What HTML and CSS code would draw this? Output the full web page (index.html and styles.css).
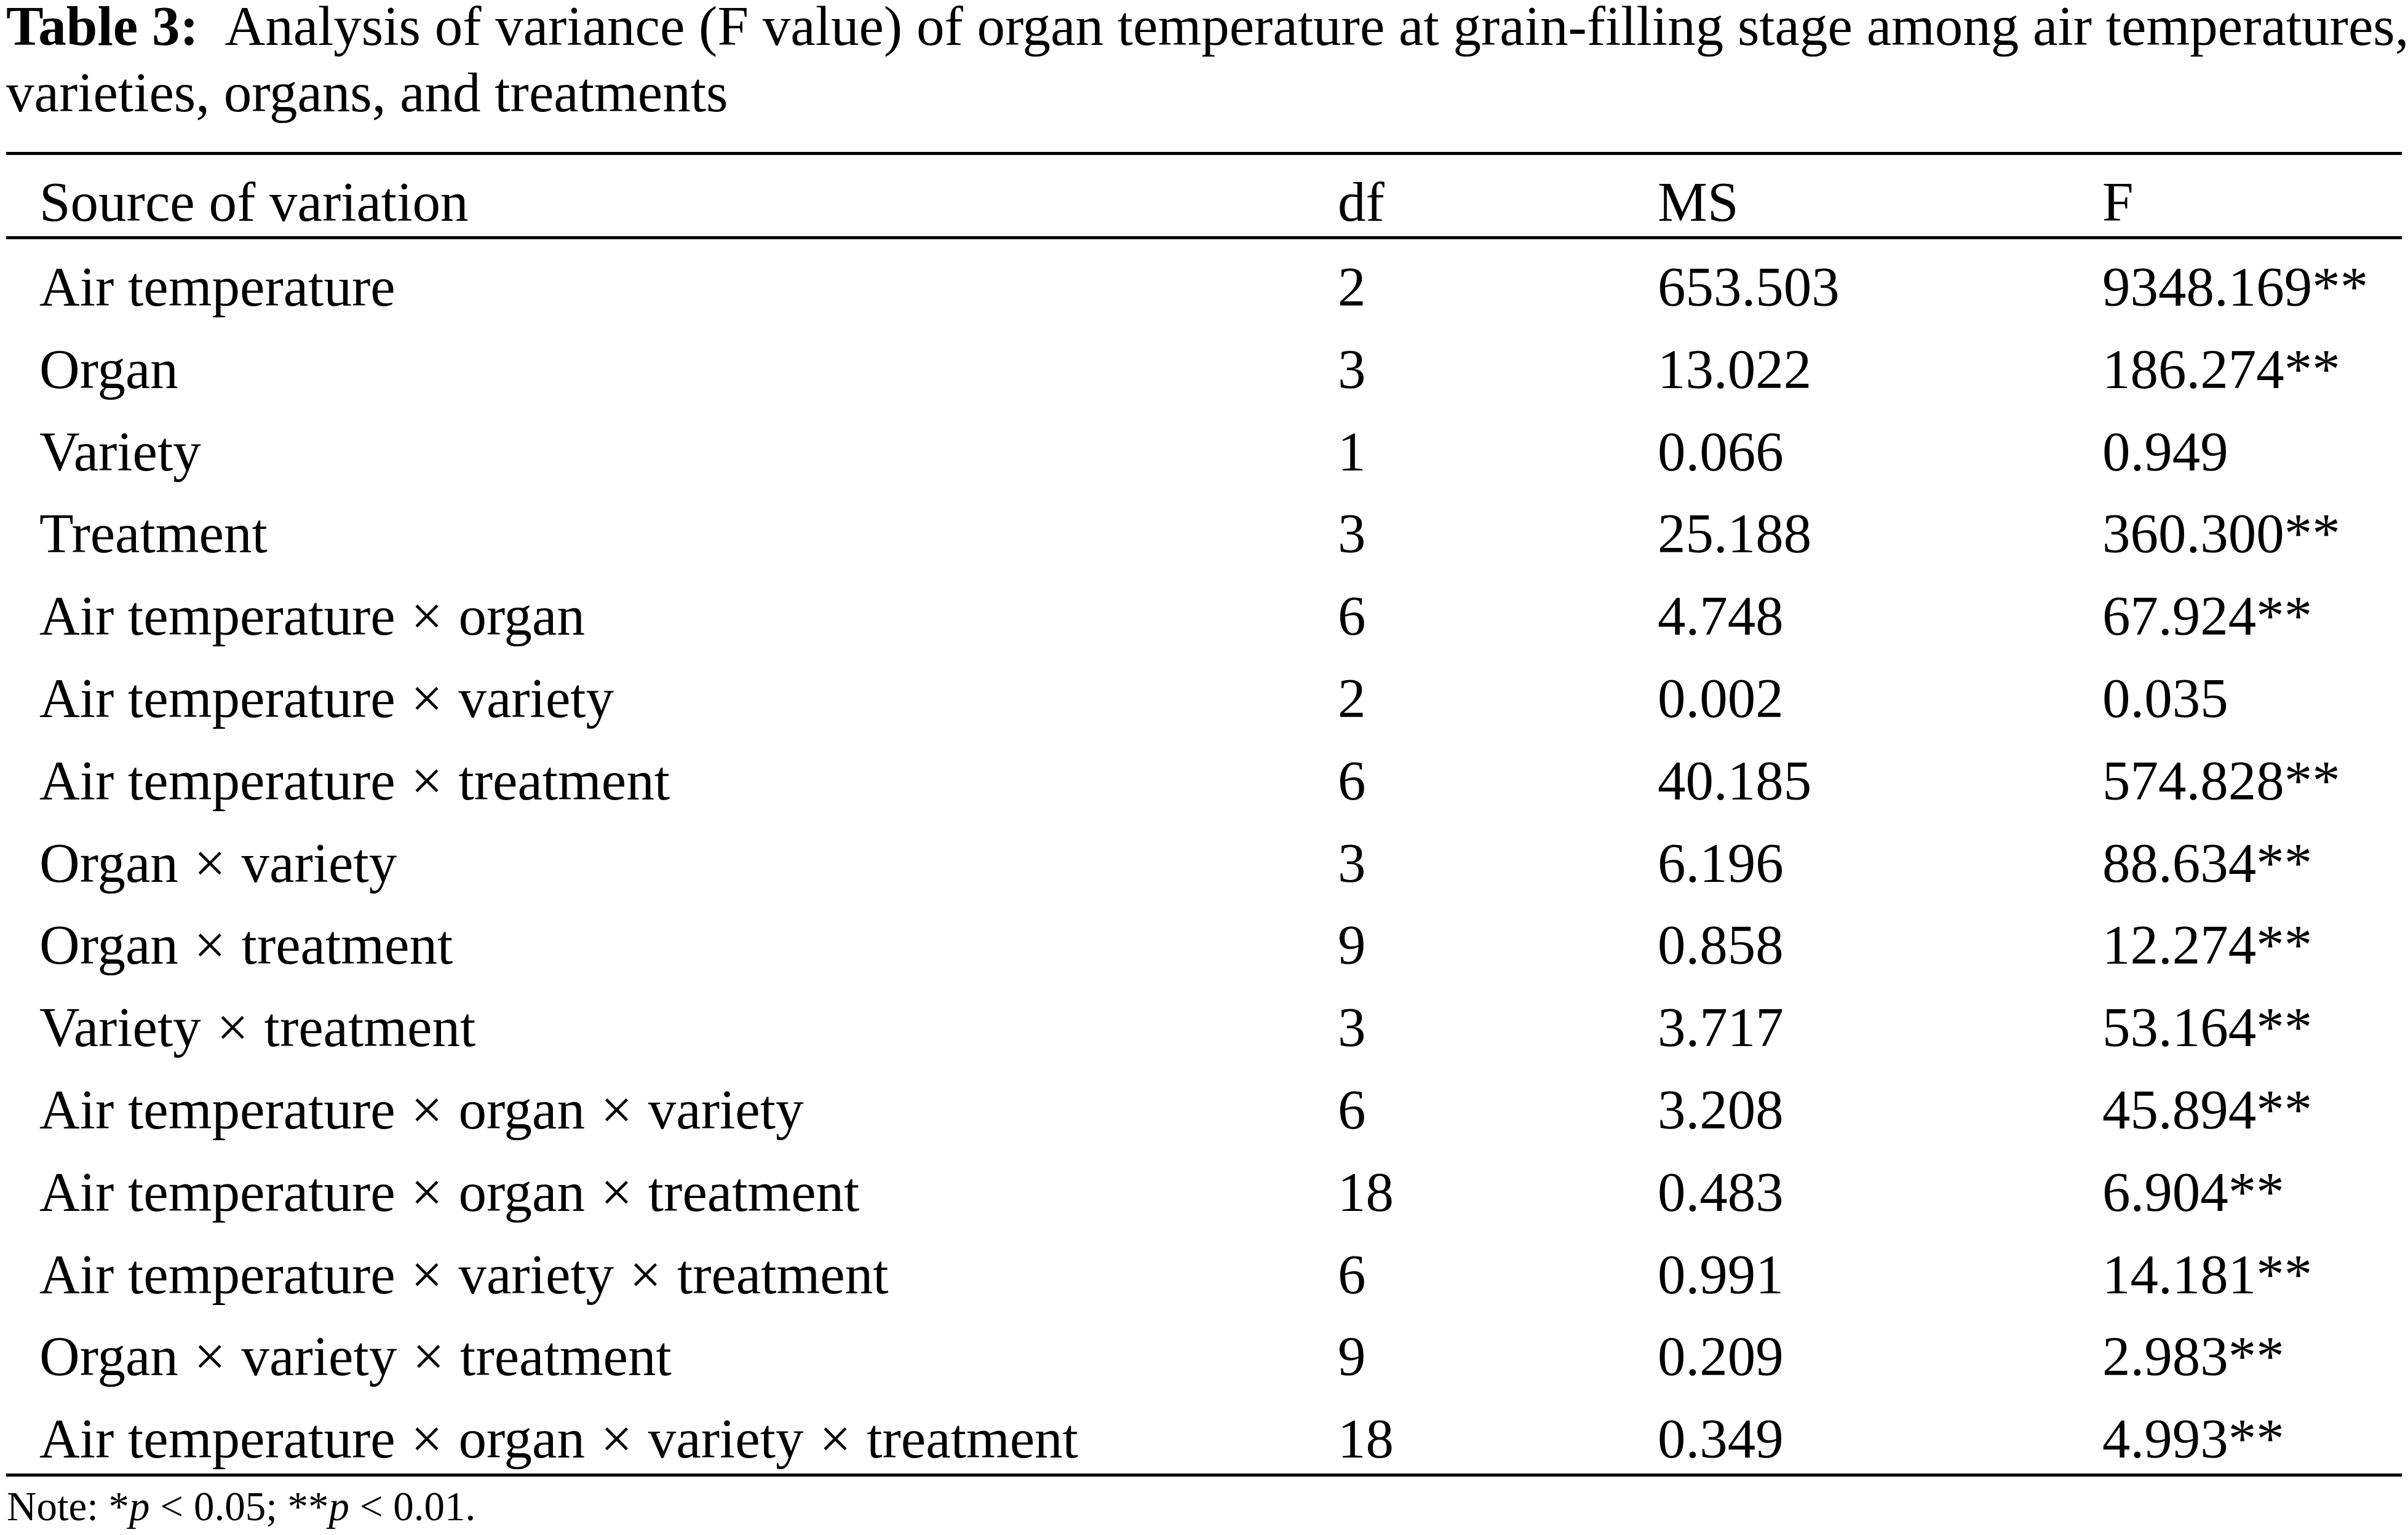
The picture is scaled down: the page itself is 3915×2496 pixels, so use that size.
FILE: index.html
```html
<!DOCTYPE html>
<html lang="en">
<head>
<meta charset="utf-8">
<title>Table 3</title>
<link rel="stylesheet" href="styles.css">
</head>
<body>
<div class="page">
  <div class="caption"><b class="label">Table 3:</b> Analysis of variance (F value) of organ temperature at grain-filling stage among air temperatures,<br>varieties, organs, and treatments</div>
  <table class="anova">
    <colgroup>
      <col class="c-src">
      <col class="c-df">
      <col class="c-ms">
      <col class="c-f">
    </colgroup>
    <thead>
      <tr><th class="src">Source of variation</th><th>df</th><th>MS</th><th>F</th></tr>
    </thead>
    <tbody>
      <tr><td class="src">Air temperature</td><td>2</td><td>653.503</td><td>9348.169**</td></tr>
      <tr><td class="src">Organ</td><td>3</td><td>13.022</td><td>186.274**</td></tr>
      <tr><td class="src">Variety</td><td>1</td><td>0.066</td><td>0.949</td></tr>
      <tr><td class="src">Treatment</td><td>3</td><td>25.188</td><td>360.300**</td></tr>
      <tr><td class="src">Air temperature <span class="x">×</span> organ</td><td>6</td><td>4.748</td><td>67.924**</td></tr>
      <tr><td class="src">Air temperature <span class="x">×</span> variety</td><td>2</td><td>0.002</td><td>0.035</td></tr>
      <tr><td class="src">Air temperature <span class="x">×</span> treatment</td><td>6</td><td>40.185</td><td>574.828**</td></tr>
      <tr><td class="src">Organ <span class="x">×</span> variety</td><td>3</td><td>6.196</td><td>88.634**</td></tr>
      <tr><td class="src">Organ <span class="x">×</span> treatment</td><td>9</td><td>0.858</td><td>12.274**</td></tr>
      <tr><td class="src">Variety <span class="x">×</span> treatment</td><td>3</td><td>3.717</td><td>53.164**</td></tr>
      <tr><td class="src">Air temperature <span class="x">×</span> organ <span class="x">×</span> variety</td><td>6</td><td>3.208</td><td>45.894**</td></tr>
      <tr><td class="src">Air temperature <span class="x">×</span> organ <span class="x">×</span> treatment</td><td>18</td><td>0.483</td><td>6.904**</td></tr>
      <tr><td class="src">Air temperature <span class="x">×</span> variety <span class="x">×</span> treatment</td><td>6</td><td>0.991</td><td>14.181**</td></tr>
      <tr><td class="src">Organ <span class="x">×</span> variety <span class="x">×</span> treatment</td><td>9</td><td>0.209</td><td>2.983**</td></tr>
      <tr><td class="src">Air temperature <span class="x">×</span> organ <span class="x">×</span> variety <span class="x">×</span> treatment</td><td>18</td><td>0.349</td><td>4.993**</td></tr>
    </tbody>
  </table>
  <p class="note">Note: *<i>p</i> &lt; 0.05; **<i>p</i> &lt; 0.01.</p>
</div>
</body>
</html>
```

FILE: styles.css
```css
html, body {
  margin: 0;
  padding: 0;
  background: #ffffff;
}

body {
  font-family: "Liberation Serif", "Times New Roman", serif;
  color: #000000;
}

.page {
  width: 3895px;
  margin-left: 10px;
}

.caption {
  margin-top: -11px;
  font-size: 91px;
  line-height: 108px;
  white-space: nowrap;
}

.caption .label {
  font-weight: bold;
  margin-right: 25px;
}

.anova {
  margin-top: 42px;
  width: 3895px;
  table-layout: fixed;
  border-collapse: separate;
  border-spacing: 0;
  border-top: 5px solid #000000;
  border-bottom: 5px solid #000000;
  font-size: 91px;
  line-height: 100px;
}

.c-src { width: 2165px; }
.c-df { width: 520px; }
.c-ms { width: 723px; }
.c-f { width: 487px; }

.anova th,
.anova td {
  text-align: left;
  font-weight: normal;
  white-space: nowrap;
  padding: 28px 0 5.8px 0;
  vertical-align: top;
}

.anova th {
  padding-top: 27px;
  padding-bottom: 5px;
  border-bottom: 5px solid #000000;
}

.anova .src {
  padding-left: 54px;
}

.anova .x {
  margin: 0 3px;
}

.note {
  margin: 8.4px 0 0 1px;
  font-size: 67px;
  line-height: 80px;
}
```
